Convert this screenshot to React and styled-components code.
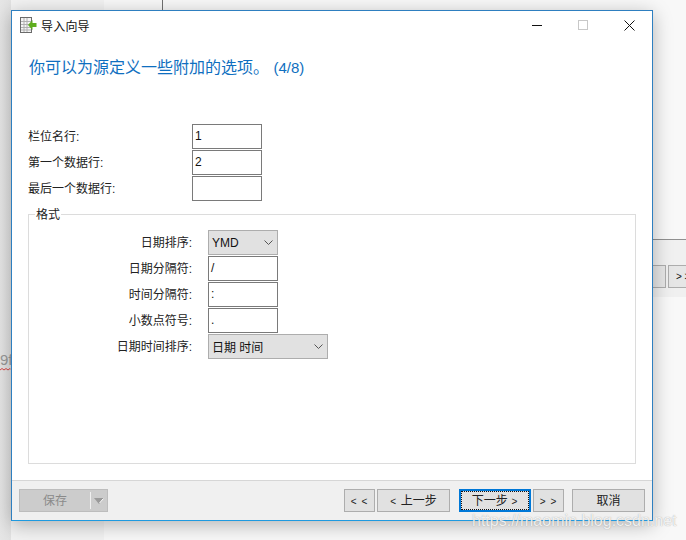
import React from 'react';
import styled, { createGlobalStyle } from 'styled-components';

const Global = createGlobalStyle`
  html, body { margin: 0; padding: 0; background: #fff; }
  body { font-family: "Liberation Sans", "Noto Sans CJK SC", sans-serif; }
`;

const Desktop = styled.div`
  position: relative;
  width: 686px;
  height: 540px;
  overflow: hidden;
  background: #f8f8f8;
`;

// things from the windows behind the dialog
const BackLeft = styled.div`
  position: absolute;
  left: 0;
  top: 0;
  width: 104px;
  height: 540px;
  background: linear-gradient(90deg, #e6e6e6 0, #e2e2e2 11px, #f2f2f2 11px);
`;
const BackLine = styled.div`
  position: absolute;
  left: 162px;
  top: 0;
  width: 1px;
  height: 11px;
  background: #707070;
`;
const BackRule = styled.div`
  position: absolute;
  left: 653px;
  top: 239px;
  width: 33px;
  height: 1px;
  background: #909090;
`;
const BackPanel = styled.div`
  position: absolute;
  left: 653px;
  top: 240px;
  width: 33px;
  height: 57px;
  background: #f0f0f0;
`;
const BackBtn = styled.div`
  position: absolute;
  left: ${p => p.$left}px;
  top: 265px;
  width: ${p => p.$width}px;
  height: 23px;
  border: 1px solid #adadad;
  background: #e6e6e6;
  box-sizing: border-box;
  font-size: 10px;
  line-height: 21px;
  padding-left: 7px;
  white-space: pre;
  color: #111;
`;
const BackTypo = styled.div`
  position: absolute;
  left: 0;
  top: 351px;
  font-size: 15px;
  color: #9a9a9a;
  line-height: 18px;
  width: 11px;
  height: 20px;
  overflow: hidden;
`;
const Squiggle = styled.svg`
  position: absolute;
  left: 0;
  top: 368px;
`;

const Dialog = styled.div`
  position: absolute;
  left: 11px;
  top: 10px;
  width: 642px;
  height: 511px;
  box-sizing: border-box;
  border: 1px solid #2e7fc0;
  border-bottom-color: #1e9ae0;
  background: #fff;
  display: flex;
  flex-direction: column;
  box-shadow: 0 4px 18px rgba(0, 0, 0, 0.28);
`;

const TitleBar = styled.div`
  height: 28px;
  display: flex;
  align-items: center;
  padding-left: 8px;
  flex: none;
`;
const TitleText = styled.span`
  margin-left: 4px;
  font-size: 12px;
  color: #111;
  letter-spacing: 0.2px;
`;
const WinButtons = styled.div`
  margin-left: auto;
  display: flex;
  align-items: center;
`;
const WinButton = styled.div`
  width: 46px;
  height: 28px;
  display: flex;
  align-items: center;
  justify-content: center;
`;

const Content = styled.div`
  flex: 1;
  display: flex;
  flex-direction: column;
  padding: 0 16px 0 16px;
`;
const Heading = styled.h1`
  margin: 18px 0 0 1px;
  font-size: 16px;
  font-weight: 400;
  line-height: 22px;
  color: #0f6fc0;
  white-space: nowrap;
`;
const HeadingStep = styled.span`
  font-size: 15px;
`;

const TopForm = styled.div`
  margin-top: 45px;
  display: grid;
  grid-template-columns: 164px 70px;
  grid-auto-rows: 25px;
  row-gap: 1px;
`;
const InnerForm = styled.div`
  margin-top: 15px;
  display: grid;
  grid-template-columns: 179px 70px 50px;
  column-gap: 0;
  grid-auto-rows: 25px;
  row-gap: 1px;
`;
const Label = styled.label`
  font-size: 12px;
  color: #222;
  line-height: 27px;
  white-space: nowrap;
  text-align: ${p => (p.$right ? 'right' : 'left')};
  padding-right: ${p => (p.$right ? '16px' : '0')};
`;
const Field = styled.div`
  box-sizing: border-box;
  height: 25px;
  border: 1px solid #7a7a7a;
  background: #fff;
  font-size: 12px;
  line-height: 23px;
  padding-left: 2px;
  color: #111;
`;
const Select = styled.div`
  box-sizing: border-box;
  height: 25px;
  border: 1px solid #adadad;
  background: #e1e1e1;
  font-size: 12px;
  color: #111;
  display: flex;
  align-items: center;
  justify-content: space-between;
  padding: 0 4px 0 3px;
  grid-column: ${p => p.$col || 'auto'};
`;

const Group = styled.div`
  margin: 13px 0 0 0;
  padding: 0;
  width: 608px;
  height: 250px;
  box-sizing: border-box;
  border: 1px solid #dcdcdc;
  position: relative;
`;
const GroupTitle = styled.div`
  position: absolute;
  left: 6px;
  top: -7px;
  background: #fff;
  padding: 0 1px;
  font-size: 12px;
  line-height: 14px;
  color: #222;
`;

const Footer = styled.div`
  height: 40px;
  flex: none;
  box-sizing: border-box;
  border-top: 1px solid #d6d6d6;
  background: #f0f0f0;
  display: flex;
  align-items: flex-start;
  padding: 8px 7px 0 7px;
`;
const SaveButton = styled.div`
  width: 89px;
  height: 23px;
  box-sizing: border-box;
  border: 1px solid #bdbdbd;
  background: #cccccc;
  display: flex;
  font-size: 12px;
  color: #8a8a8a;
`;
const SaveLabel = styled.div`
  flex: 1;
  text-align: center;
  line-height: 22px;
`;
const SaveArrow = styled.div`
  width: 16px;
  margin: 2px 0;
  border-left: 1px solid #f0f0f0;
  display: flex;
  align-items: center;
  justify-content: center;
`;
const NavGroup = styled.div`
  margin-left: auto;
  display: flex;
`;
const Button = styled.div`
  box-sizing: border-box;
  width: ${p => p.$w}px;
  height: 23px;
  margin-left: ${p => p.$gap || 0}px;
  border: 1px solid #adadad;
  background: #e1e1e1;
  font-size: 12px;
  line-height: 22px;
  text-align: center;
  color: #222;
  white-space: pre;
  ${p => p.$focus && `
    border: 2px solid #0078d7;
    line-height: 20px;
    outline: 1px dotted #111;
    outline-offset: -3px;
  `}
`;
const Arrows = styled.span`
  font-size: 10px;
  letter-spacing: 1px;
`;
const Watermark = styled.div`
  position: absolute;
  left: 472px;
  top: 513px;
  font-size: 16px;
  line-height: 16px;
  color: rgba(255, 255, 255, 0.85);
  text-shadow: 0 0 1px rgba(120, 120, 120, 0.7);
  white-space: nowrap;
`;

function Chevron() {
  return (
    <svg width="9" height="5" viewBox="0 0 9 5" fill="none">
      <path d="M0.5 0.5 L4.5 4.5 L8.5 0.5" stroke="#555" strokeWidth="1" />
    </svg>
  );
}

function ImportIcon() {
  return (
    <svg width="17" height="17" viewBox="0 0 17 17" style={{ flex: 'none' }}>
      <rect x="0.5" y="0.5" width="11" height="15" fill="#f4f4f4" stroke="#6a6a6a" />
      <path d="M1 4.5H11M1 7.5H11M1 10.5H11M1 13H11M4 1V15M7 1V15" stroke="#b0b0b0" strokeWidth="1" />
      <path d="M8 8 L12.5 3 V6 H16.5 V10 H12.5 V13 Z" fill="#5fae1e" />
    </svg>
  );
}

function App() {
  return (
    <Desktop>
      <Global />
      <BackLeft />
      <BackLine />
      <BackRule />
      <BackPanel />
      <BackBtn $left={640} $width={26} />
      <BackBtn $left={668} $width={30}>{'> >'}</BackBtn>
      <BackTypo>9f</BackTypo>
      <Squiggle width="11" height="3" viewBox="0 0 11 3" fill="none">
        <path d="M0 2L2 0.5L4 2L6 0.5L8 2L10 0.5L11 1.5" stroke="#d84a4a" strokeWidth="1" />
      </Squiggle>
      <Dialog>
        <TitleBar>
          <ImportIcon />
          <TitleText>导入向导</TitleText>
          <WinButtons>
            <WinButton>
              <svg width="10" height="10" viewBox="0 0 10 10"><path d="M0 5.5H10" stroke="#111" /></svg>
            </WinButton>
            <WinButton>
              <svg width="10" height="10" viewBox="0 0 10 10"><rect x="0.5" y="0.5" width="9" height="9" fill="none" stroke="#c8c8c8" /></svg>
            </WinButton>
            <WinButton>
              <svg width="11" height="11" viewBox="0 0 11 11"><path d="M0.5 0.5L10.5 10.5M10.5 0.5L0.5 10.5" stroke="#111" /></svg>
            </WinButton>
          </WinButtons>
        </TitleBar>
        <Content>
          <Heading>你可以为源定义一些附加的选项。 <HeadingStep>(4/8)</HeadingStep></Heading>
          <TopForm>
            <Label>栏位名行:</Label><Field>1</Field>
            <Label>第一个数据行:</Label><Field>2</Field>
            <Label>最后一个数据行:</Label><Field />
          </TopForm>
          <Group>
            <GroupTitle>格式</GroupTitle>
            <InnerForm>
              <Label $right>日期排序:</Label>
              <Select>YMD<Chevron /></Select>
              <span />
              <Label $right>日期分隔符:</Label>
              <Field>/</Field>
              <span />
              <Label $right>时间分隔符:</Label>
              <Field>:</Field>
              <span />
              <Label $right>小数点符号:</Label>
              <Field>.</Field>
              <span />
              <Label $right>日期时间排序:</Label>
              <Select $col="2 / span 2">日期 时间<Chevron /></Select>
            </InnerForm>
          </Group>
        </Content>
        <Footer>
          <SaveButton>
            <SaveLabel>保存</SaveLabel>
            <SaveArrow>
              <svg width="10" height="6" viewBox="0 0 10 6"><path d="M0 0H10L5 6Z" fill="#9a9a9a" /><path d="M9.5 0.5L5.5 5" stroke="#fff" /></svg>
            </SaveArrow>
          </SaveButton>
          <NavGroup>
            <Button $w={31}><Arrows>{'< <'}</Arrows></Button>
            <Button $w={73} $gap={2}><Arrows>{'< '}</Arrows>上一步</Button>
            <Button $w={72} $gap={9} $focus>下一步<Arrows>{' >'}</Arrows></Button>
            <Button $w={31} $gap={2}><Arrows>{'> >'}</Arrows></Button>
            <Button $w={73} $gap={8}>取消</Button>
          </NavGroup>
        </Footer>
      </Dialog>
      <Watermark>https://maomin.blog.csdn.net</Watermark>
    </Desktop>
  );
}

export default App;
